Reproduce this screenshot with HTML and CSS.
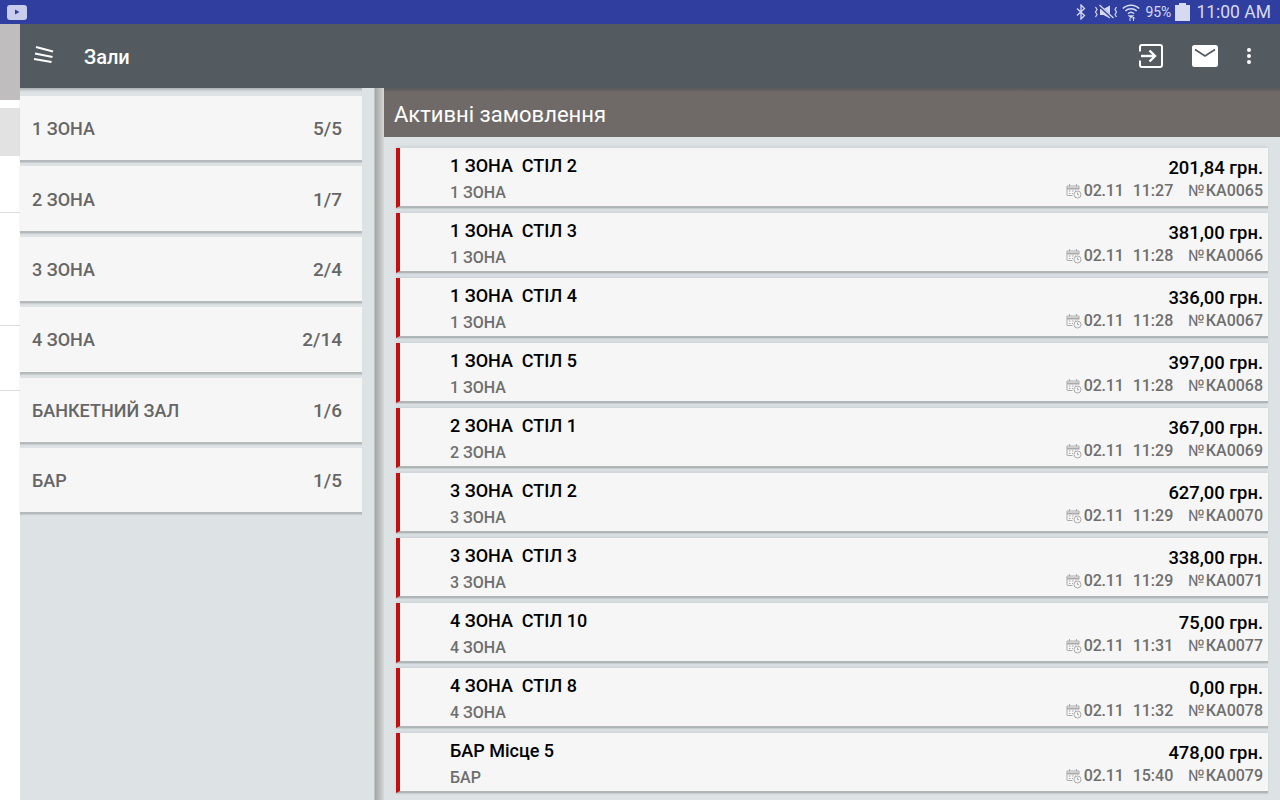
FILE: index.html
```html
<!DOCTYPE html>
<html lang="uk">
<head>
  <meta charset="UTF-8" />
  <title>Зали</title>
  <link rel="stylesheet" href="styles.css">
</head>
<body>

  <div class="statusbar">
    <span class="yt-badge"><svg width="8" height="8" viewBox="0 0 8 8"><path d="M2 1.500L6.500 4L2 6.500z" fill="#303f9f"/></svg></span>
    <div class="status-right">
      <svg class="st-bt" width="10" height="16" viewBox="0 0 10 16" fill="none" stroke="#d6daf0" stroke-width="1.300"><path d="M1 4.500l7.500 7L5 15V1l3.500 3.500L1 11.500"/></svg>
      <svg class="st-mute" width="24" height="16" viewBox="0 0 24 16" fill="none" stroke="#d6daf0" stroke-width="1.200"><path d="M1.500 3L3 5.500 1.500 8 3 10.500 1.500 13"/><path d="M22.500 3L21 5.500 22.500 8 21 10.500 22.500 13"/><path d="M6 5h3.500L16 1.500v13L9.500 11H6z" fill="#d6daf0" stroke="none"/><path d="M5 1.500l14 13" stroke="#303f9f" stroke-width="2.400"/><path d="M5.500 1l14 13"/></svg>
      <svg class="st-wifi" width="18" height="19" viewBox="0 0 18 19" fill="none" stroke="#d6daf0" stroke-width="1.500"><path d="M.8 5.500c4.500-4.500 11.900-4.500 16.400 0"/><path d="M3.300 8c3.200-3 8.200-3 11.400 0"/><path d="M6 10.700c1.700-1.600 4.300-1.600 6 0"/><path d="M7.500 13l1 1h1l1-1z" fill="#d6daf0"/><path d="M8 18v-3M11.500 18v-4M10.200 15.500l1.300-1.500 1.300 1.500" stroke-width="1"/></svg>
      <span class="st-pct">95%</span>
      <span class="battery"></span>
      <span class="st-time">11:00 AM</span>
    </div>
  </div>

  <div class="app">

    <div class="drawer-peek">
      <div class="peek-a"></div>
      <div class="peek-b"></div>
      <div class="peek-c"></div>
      <div class="peek-d"></div>
      <div class="peek-e"></div>
      <div class="peek-f"></div>
    </div>

    <div class="main">

      <div class="toolbar">
        <svg class="menu-icon" width="22" height="20" viewBox="0 0 22 20" fill="none" stroke="#fff" stroke-width="2"><path d="M3 2l17 4.500"/><path d="M2 8.500l17.500 3.500"/><path d="M1 14l17.500 3"/></svg>
        <span class="toolbar-title">Зали</span>
        <div class="toolbar-actions">
          <svg width="24" height="24" viewBox="0 0 24 24" fill="none" stroke="#fff" stroke-width="2"><path d="M1 7.500V3a2 2 0 0 1 2-2h18a2 2 0 0 1 2 2v18a2 2 0 0 1-2 2H3a2 2 0 0 1-2-2v-4.500"/><path d="M2 12h14" stroke-width="2.400"/><path d="M10.500 6.500L16 12l-5.500 5.500" stroke-width="2.400"/></svg>
          <svg width="26" height="22" viewBox="0 0 26 22"><path d="M2.500 0h21A2.500 2.500 0 0 1 26 2.500v17a2.500 2.500 0 0 1-2.500 2.500h-21A2.500 2.500 0 0 1 0 19.500v-17A2.500 2.500 0 0 1 2.500 0z" fill="#fff"/><path d="M3 4.500l10 6.500 10-6.500" fill="none" stroke="#535b60" stroke-width="1.800"/></svg>
          <svg width="4" height="16" viewBox="0 0 4 16" fill="#fff"><circle cx="2" cy="2" r="2"/><circle cx="2" cy="8" r="2"/><circle cx="2" cy="14" r="2"/></svg>
        </div>
      </div>

      <div class="content">

        <div class="halls">
          <div class="hall"><span>1 ЗОНА</span><span class="hall-count">5/5</span></div>
          <div class="hall"><span>2 ЗОНА</span><span class="hall-count">1/7</span></div>
          <div class="hall"><span>3 ЗОНА</span><span class="hall-count">2/4</span></div>
          <div class="hall"><span>4 ЗОНА</span><span class="hall-count">2/14</span></div>
          <div class="hall"><span>БАНКЕТНИЙ ЗАЛ</span><span class="hall-count">1/6</span></div>
          <div class="hall"><span>БАР</span><span class="hall-count">1/5</span></div>
        </div>

        <div class="split"></div>

        <div class="orders">
          <div class="orders-head">Активні замовлення</div>
          <div class="orders-list" id="list"></div>
        </div>

      </div>
    </div>
  </div>

  <script>
    const rows = [
      ['1 ЗОНА  СТІЛ 2', '1 ЗОНА', '201,84', '11:27', 'КА0065'],
      ['1 ЗОНА  СТІЛ 3', '1 ЗОНА', '381,00', '11:28', 'КА0066'],
      ['1 ЗОНА  СТІЛ 4', '1 ЗОНА', '336,00', '11:28', 'КА0067'],
      ['1 ЗОНА  СТІЛ 5', '1 ЗОНА', '397,00', '11:28', 'КА0068'],
      ['2 ЗОНА  СТІЛ 1', '2 ЗОНА', '367,00', '11:29', 'КА0069'],
      ['3 ЗОНА  СТІЛ 2', '3 ЗОНА', '627,00', '11:29', 'КА0070'],
      ['3 ЗОНА  СТІЛ 3', '3 ЗОНА', '338,00', '11:29', 'КА0071'],
      ['4 ЗОНА  СТІЛ 10', '4 ЗОНА', '75,00', '11:31', 'КА0077'],
      ['4 ЗОНА  СТІЛ 8', '4 ЗОНА', '0,00', '11:32', 'КА0078'],
      ['БАР Місце 5', 'БАР', '478,00', '15:40', 'КА0079']
    ];
    const cal = '<svg class="cal" width="16" height="16" viewBox="0 0 16 16" fill="none" stroke="#aaa" stroke-width="1"><path d="M6.500 12.500H1.500a.5.5 0 0 1-.5-.5V3h12v3.500"/><path d="M1 5.500h12" stroke-width="2"/><path d="M3.500 1v2.500M10.500 1v2.500"/><path d="M3 8h1.500M6 8h1.500M9 8h1M3 10.500h1.500M6 10.500h1"/><circle cx="11.500" cy="11.500" r="3.500"/><path d="M11.500 9.500v2.200h1.500"/></svg>';
    document.getElementById('list').innerHTML = rows.map(r => `
      <div class="order">
        <div class="order-left">
          <div class="order-name">${r[0]}</div>
          <div class="order-zone">${r[1]}</div>
        </div>
        <div class="order-right">
          <div class="order-sum">${r[2]} грн.</div>
          <div class="order-meta">${cal}<span class="order-date">02.11</span><span class="order-time">${r[3]}</span><span class="order-no"><span class="no-sign">№</span>${r[4]}</span></div>
        </div>
      </div>`).join('');
  </script>

</body>
</html>
```

FILE: styles.css
```css
/* Reset & Base */
* { box-sizing: border-box; margin: 0; padding: 0; }
html, body { height: 100%; overflow: hidden; }
body {
  font-family: Roboto, 'Noto Sans', sans-serif;
  background: #dde3e5;
  color: #000;
  display: flex;
  flex-direction: column;
}

/* Status bar */
.statusbar {
  height: 24px;
  flex-shrink: 0;
  background: #303f9f;
  display: flex;
  align-items: center;
  justify-content: space-between;
  padding: 0 9px 0 7px;
  color: #d6daf0;
}
.yt-badge {
  width: 20px;
  height: 15px;
  border-radius: 3px;
  background: #c9cdec;
  display: flex;
  align-items: center;
  justify-content: center;
}
.status-right { display: flex; align-items: center; }
.st-bt { margin-right: 8px; }
.st-mute { margin-right: 4px; }
.st-wifi { margin-right: 5px; }
.st-pct { font-size: 14px; }
.battery {
  width: 15px;
  height: 16px;
  margin: 2px 6px 0 4px;
  background: #d6daf0;
  position: relative;
}
.battery::before {
  content: '';
  position: absolute;
  top: -2px;
  left: 4px;
  width: 7px;
  height: 2px;
  background: #d6daf0;
}
.st-time { font-size: 17.500px; }

/* App frame */
.app {
  flex: 1;
  display: flex;
  min-height: 0;
}
.drawer-peek {
  width: 20px;
  background: #fff;
  flex-shrink: 0;
}
.peek-a { height: 76px; background: #bfbdbd; }
.peek-b { height: 8px; background: #fff; }
.peek-c { height: 48px; background: #e2e2e2; }
.peek-d { height: 57px; border-bottom: 1px solid #ddd; }
.peek-e { height: 113px; border-bottom: 1px solid #ddd; }
.peek-f { height: 65px; border-bottom: 1px solid #ddd; }
.main {
  flex: 1;
  display: flex;
  flex-direction: column;
  min-width: 0;
}

/* Toolbar */
.toolbar {
  height: 64px;
  flex-shrink: 0;
  background: #535b60;
  display: flex;
  align-items: center;
  padding-left: 13px;
  color: #fff;
}
.menu-icon { margin-top: -2px; }
.toolbar-title {
  font-size: 20px;
  font-weight: 500;
  margin: 2px 0 0 29px;
  flex: 1;
}
.toolbar-actions {
  display: flex;
  align-items: center;
  margin-right: 29px;
  gap: 29px;
}
.toolbar-actions svg { display: block; }

/* Content area */
.content {
  flex: 1;
  display: flex;
  min-height: 0;
}

/* Halls */
.halls {
  width: 342px;
  padding-top: 8px;
  display: flex;
  flex-direction: column;
  gap: 4px;
  flex-shrink: 0;
  background: linear-gradient(#a9b0b4, #dde3e5 4px);
}
.hall {
  height: 66.400px;
  flex-shrink: 0;
  background: #f6f6f6;
  border-bottom: 2px solid #b4b9bb;
  box-shadow: 0 1px 1px #c8cdd0;
  display: flex;
  align-items: center;
  justify-content: space-between;
  padding: 1px 20px 0 12px;
  font-size: 18px;
  font-weight: 500;
  color: #666;
}
.hall-count { font-size: 19px; }
.split {
  width: 22px;
  flex-shrink: 0;
  background: linear-gradient(to right, #dde3e5 0, #dde3e5 12px, #a4a6a6 13px, #c4c6c6 19px, #d6dadb 22px);
}

/* Orders */
.orders {
  flex: 1;
  display: flex;
  flex-direction: column;
  min-width: 0;
}
.orders-head {
  height: 49px;
  flex-shrink: 0;
  background: #6f6a68;
  color: #fff;
  font-size: 22px;
  display: flex;
  align-items: center;
  padding: 3px 0 0 10px;
  background-image: linear-gradient(#57595a, #6f6a68 4px);
}
.orders-list {
  padding: 11px 12px 0;
  display: flex;
  flex-direction: column;
  gap: 5px;
}
.order {
  height: 60px;
  flex-shrink: 0;
  background: #f6f6f6;
  border-left: 4px solid #c40f0f;
  border-bottom: 2px solid #b0b5b8;
  box-shadow: 0 1px 1px #c8cdd0, 0 -2px 2px #d0d6d9;
  display: flex;
  justify-content: space-between;
  padding: 0 5px 0 50px;
}
.order-left { padding-top: 7px; }
.order-name {
  font-size: 18px;
  font-weight: 500;
  line-height: 21px;
  white-space: pre;
}
.order-zone {
  font-size: 16px;
  font-weight: 500;
  color: #6e6e6e;
  line-height: 18px;
  margin-top: 8px;
}
.order-right {
  display: flex;
  flex-direction: column;
  align-items: flex-end;
  padding-top: 9px;
}
.order-sum { font-size: 18.400px; font-weight: 500; line-height: 21px; }
.order-meta {
  display: flex;
  align-items: center;
  font-size: 16px;
  font-weight: 500;
  color: #6e6e6e;
  line-height: 18px;
  margin-top: 4px;
}
.cal { margin-right: 2px; }
.order-date { letter-spacing: -.2px; }
.order-time { margin-left: 9px; }
.order-no { margin-left: 15px; }
.no-sign { font-weight: 400; margin-right: 1px; }
```
